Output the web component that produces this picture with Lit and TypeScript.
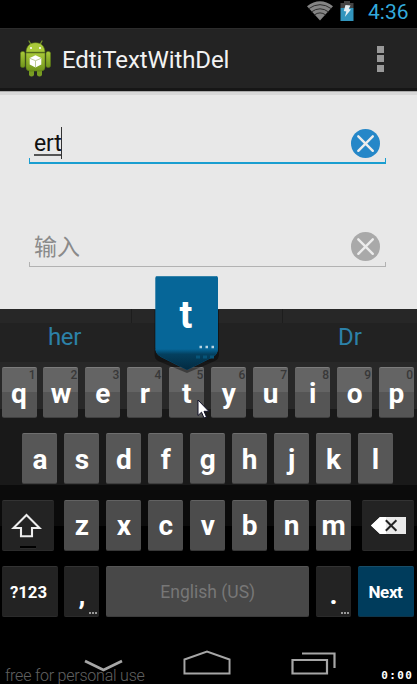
import { LitElement, html, css, svg, nothing } from "lit";
import { customElement, property } from "lit/decorators.js";
import { classMap } from "lit/directives/class-map.js";

@customElement("edit-field")
class EditField extends LitElement {
  @property() value = "";
  @property() hint = "";
  @property({ type: Boolean }) active = false;

  static styles = css`
    :host { display: block; }
    .field {
      position: relative; display: flex; align-items: center; justify-content: space-between;
      height: 46px; padding: 0 6px 0 5px; box-sizing: border-box;
    }
    .text { font-size: 23px; line-height: 46px; display: flex; align-items: center; color: #111; }
    .typed { line-height: 20px; height: 22px; border-bottom: 2px solid #555; box-sizing: border-box; position: relative; top: 4px; letter-spacing: -0.2px; }
    .hint { color: #8a8a8a; font-weight: 400; position: relative; top: 4px; }
    .caret { width: 1px; height: 32px; background: #333; position: relative; top: 2px; }
    .clear { width: 29px; height: 29px; display: block; position: relative; top: 2px; }
    .edge { position: absolute; left: 0; right: 0; bottom: 0; height: 4px; border: 1px solid #b2b2b2; border-top: 0; }
    .edge.on { border: 1px solid #1a9ed0; border-bottom-width: 2px; border-top: 0; height: 4px; }
  `;

  render() {
    return html`<div class="field">
      <div class="text">
        ${this.value
          ? html`<span class="typed">${this.value}</span><span class="caret"></span>`
          : html`<span class="hint">${this.hint}</span>`}
      </div>
      <svg class="clear" viewBox="0 0 29 29">
        <circle cx="14.5" cy="14.5" r="14.5" fill=${this.active ? "#2587c8" : "#a9a9a9"} />
        <path d="M7.3 7.3L21.8 21.8M21.8 7.3L7.3 21.8" stroke="#ececec" stroke-width="2.4" stroke-linecap="round" />
      </svg>
      <div class=${classMap({ edge: true, on: this.active })}></div>
    </div>`;
  }
}

@customElement("key-cap")
class KeyCap extends LitElement {
  @property() label = "";
  @property() alt = "";
  @property() kind = "letter";
  @property({ type: Boolean }) more = false;

  static styles = css`
    :host { display: block; min-width: 0; }
    .key {
      position: relative; height: 51px; border-radius: 2px; box-sizing: border-box;
      display: flex; align-items: center; justify-content: center;
      color: #fff; font-weight: 700; font-size: 28px; line-height: 32px;
      border-top: 1px solid #6e6e6e; border-bottom: 1px solid #404040;
      background: #575757;
    }
    .label { position: relative; top: 1px; white-space: nowrap; }
    .top { background: linear-gradient(#646464 0 50%, #555 50%); border-top-color: #7c7c7c; }
    .low { background: #4c4c4c; border-top-color: #626262; border-bottom-color: #373737; }
    .dark { background: #232323; border-color: #333 #333 #2b2b2b; }
    .small { font-size: 16.8px; }
    .small .label { top: 0; left: -1px; }
    .punct .label { top: 3px; left: 0; }
    .space { background: #484848; border-color: #555 #555 #3c3c3c; font-size: 17.5px; font-weight: 400; color: #777; }
    .space .label { top: 0; }
    .next { background: #003c5c; border-color: #174d68 #174d68 #0e354a; font-size: 17px; letter-spacing: -0.4px; }
    .next .label { top: 0; left: -0.5px; }
    .alt { position: absolute; right: 1px; top: 0; font-size: 12px; line-height: 14px; font-weight: 500; color: #383838; }
    .dots { position: absolute; right: 2px; bottom: 2px; display: flex; gap: 1px; }
    .dots i { width: 2px; height: 2px; background: #999; }
    .lock { position: absolute; left: 18px; bottom: 1px; width: 16px; height: 3px; background: #000; border-bottom: 1px solid #2c2c2c; box-sizing: border-box; }
    svg { display: block; }
    .shift { position: relative; left: -1px; }
  `;

  face() {
    if (this.label === "shift")
      return html`<svg class="shift" width="31" height="25" viewBox="0 0 31 25">
        <path d="M15.5 2L28.5 15H21V23.3H10V15H2.5Z" fill="none" stroke="#ededed" stroke-width="2.1" />
      </svg><i class="lock"></i>`;
    if (this.label === "delete")
      return html`<svg width="35" height="19" viewBox="0 0 35 19">
        <path d="M0 9.5L9 1H35V18H9Z" fill="#e9e9e9" />
        <path d="M0 9.5L9 1H15V18H9Z" fill="#fff" />
        <path d="M14.8 4.3L25.4 14.7M25.4 4.3L14.8 14.7" stroke="#222" stroke-width="2" />
      </svg>`;
    return html`<span class="label">${this.label}</span>`;
  }

  render() {
    return html`<div class="key ${this.kind}">
      ${this.face()}
      ${this.alt ? html`<span class="alt">${this.alt}</span>` : nothing}
      ${this.more ? html`<span class="dots"><i></i><i></i><i></i></span>` : nothing}
    </div>`;
  }
}

@customElement("app-root")
class AppRoot extends LitElement {
  static styles = css`
    :host {
      display: block; width: 417px; height: 684px; position: relative; overflow: hidden; background: #000;
      font-family: Roboto, "Noto Sans CJK SC", sans-serif;
    }
    svg { display: block; }
    .status { height: 28px; display: flex; align-items: flex-start; box-sizing: border-box; padding-right: 9px; justify-content: flex-end; }
    .wifi { margin: 1px 6px 0 0; }
    .battery { margin: 1px 14px 0 0; }
    .clock { font-size: 21px; line-height: 25px; color: #33aadb; width: 40px; white-space: nowrap; }
    .bar {
      height: 63px; box-sizing: border-box; background: #232323; border-top: 1px solid #2c2c2c; border-bottom: 3px solid #161616;
      display: flex; align-items: center; padding: 0 33px 0 20px;
    }
    .title { flex: 1; margin-left: 11px; font-size: 24px; line-height: 28px; color: #f2f2f2; position: relative; top: 1px; white-space: nowrap; letter-spacing: -0.1px; }
    .overflow { display: grid; gap: 2.5px; }
    .overflow i { width: 7px; height: 7px; background: #999; }
    .content { height: 218px; box-sizing: border-box; background: #e8e8e8; border-top: 1px solid #aaa; box-shadow: inset 0 3px 0 #d8d8d8; padding: 26px 31px 0 29px; }
    .content edit-field + edit-field { margin-top: 57px; }
    .keyboard {
      height: 327px; box-sizing: border-box; padding: 0 3px 0 1.5px;
      background: linear-gradient(#272727 0 14px, #222 14px 53px, #282828 53px 100px, #191919 100px 176px, #0b0b0b 176px 217px, #000 217px);
    }
    .suggest { height: 58px; display: grid; grid-template-columns: 129px 1fr 131px; color: #2c81a8; font-size: 24px; line-height: 56px; }
    .suggest span { text-align: center; }
    .suggest span:first-child { padding-right: 3px; letter-spacing: -0.3px; }
    .suggest span:last-child { padding-left: 3px; }
    .suggest .mid { border: solid #1d1d1d; border-width: 0 1px; height: 14px; }
    .row { display: grid; height: 51px; margin-bottom: 15.4px; column-gap: 6.95px; }
    .r1 { grid-template-columns: repeat(10, 1fr); }
    .r2 { grid-template-columns: repeat(9, 1fr); padding: 0 20.95px; }
    .r3 { display: flex; gap: 0; justify-content: space-between; }
    .r3 > key-cap { width: 52px; }
    .letters { display: grid; grid-template-columns: repeat(7, 35px); column-gap: 6.95px; }
    .r4 { grid-template-columns: 56px 35px 1fr 35px 56px; }
    .nav { height: 48px; position: relative; display: flex; padding: 14px 81px 0 84px; box-sizing: border-box; justify-content: space-between; }
    .mark { position: absolute; left: 5px; bottom: -2px; font-size: 16px; line-height: 20px; font-weight: 300; color: #606060; white-space: nowrap; letter-spacing: -.22px; }
    .timer { position: absolute; right: 5px; bottom: 2px; font: 700 11px/13px "DejaVu Sans Mono", monospace; color: #fff; letter-spacing: 1.4px; margin-right: -1.4px; }
    .popup { position: absolute; left: 153px; top: 274px; }
    .popletter { position: absolute; left: 155px; top: 289px; width: 62px; text-align: center; font-weight: 700; font-size: 38px; line-height: 52px; color: #fff; }
    .pointer { position: absolute; left: 197px; top: 399px; }
  `;

  bot() {
    return svg`
      <defs><linearGradient id="g" x1="0" x2="0" y1="0" y2="1">
        <stop offset="0" stop-color="#a9c93a"/><stop offset="1" stop-color="#70941b"/>
      </linearGradient></defs>
      <path d="M9 1L11.3 5M22 1L19.8 5" stroke="#78982c" stroke-width="1.2" stroke-linecap="round"/>
      <rect x="9" y="26" width="5" height="10.5" rx="2.3" fill="#789c22"/>
      <rect x="17" y="26" width="5" height="10.5" rx="2.3" fill="#789c22"/>
      <rect x="0.5" y="11.5" width="4.5" height="16" rx="1.8" fill="url(#g)" stroke="#5a7916" stroke-width=".6"/>
      <rect x="26" y="11.5" width="4.5" height="16" rx="1.8" fill="url(#g)" stroke="#5a7916" stroke-width=".6"/>
      <path d="M6 13H25V27Q25 31 21 31H10Q6 31 6 27Z" fill="url(#g)" stroke="#5a7916" stroke-width=".6"/>
      <path d="M6 12.2C6.3 6 10 2.7 15.5 2.7S24.7 6 25 12.2Z" fill="#a9c93a" stroke="#5a7916" stroke-width=".6"/>
      <circle cx="11" cy="8" r="1.1" fill="#fff"/><circle cx="20" cy="8" r="1.1" fill="#fff"/>
      <path d="M15.5 15.2L21.3 18V24.5L15.5 27.6L9.7 24.5V18Z" fill="#fff"/>
      <path d="M10 18.4L15.5 20.7L21 18.4M15.5 20.7V27" fill="none" stroke="#b5c48c" stroke-width=".9"/>`;
  }

  render() {
    const top = [..."qwertyuiop"];
    return html`
      <div class="status">
        <svg class="wifi" width="28" height="20" viewBox="0 0 28 20">
          <path d="M14 19.5L1 5.2Q14 -4.5 27 5.2Z" fill="#858585"/>
          <path d="M2.5 7.8Q14 -.5 25.5 7.8M5.3 11Q14 4.6 22.7 11M8.2 14Q14 9.8 19.8 14" fill="none" stroke="#222" stroke-width="0.9"/>
        </svg>
        <svg class="battery" width="14" height="20" viewBox="0 0 14 20">
          <path d="M4 0H10V2H13.5V7H.5V2H4Z" fill="#444"/>
          <rect x=".5" y="7" width="13" height="13" fill="#3295bd"/>
          <path d="M5.5 4L10.5 4.5L8.7 8L11 8.5L4.8 16L6.3 10.5L3.8 10Z" fill="#e4eef2"/>
        </svg>
        <div class="clock">4:36</div>
      </div>
      <div class="bar">
        <svg width="31" height="38" viewBox="0 0 31 38">${this.bot()}</svg>
        <div class="title">EdtiTextWithDel</div>
        <div class="overflow"><i></i><i></i><i></i></div>
      </div>
      <div class="content">
        <edit-field value="ert" active></edit-field>
        <edit-field hint="输入"></edit-field>
      </div>
      <div class="keyboard">
        <div class="suggest"><span>her</span><span class="mid"></span><span>Dr</span></div>
        <div class="row r1">${top.map((c, i) => html`<key-cap label=${c} alt=${String((i + 1) % 10)} kind="top"></key-cap>`)}</div>
        <div class="row r2">${[..."asdfghjkl"].map((c) => html`<key-cap label=${c}></key-cap>`)}</div>
        <div class="row r3">
          <key-cap label="shift" kind="dark"></key-cap>
          <div class="letters">${[..."zxcvbnm"].map((c) => html`<key-cap label=${c} kind="low"></key-cap>`)}</div>
          <key-cap label="delete" kind="dark"></key-cap>
        </div>
        <div class="row r4">
          <key-cap label="?123" kind="dark small"></key-cap>
          <key-cap label="," kind="dark punct" more></key-cap>
          <key-cap label="English (US)" kind="space"></key-cap>
          <key-cap label="." kind="dark punct" more></key-cap>
          <key-cap label="Next" kind="next"></key-cap>
        </div>
      </div>
      <div class="nav">
        <div class="mark">free for personal use</div>
        <svg width="40" height="28" viewBox="0 0 40 28"><path d="M1 11L19.5 20L38 11" fill="none" stroke="#a6a6a6" stroke-width="2.7"/></svg>
        <svg width="48" height="26" viewBox="0 0 48 26"><path d="M2 23.5V9.5L25 1.5L48 9.5V23.5Z" transform="translate(-.5 0) scale(.98 1)" fill="none" stroke="#a6a6a6" stroke-width="2"/></svg>
        <svg width="46" height="26" viewBox="0 0 46 26"><path d="M2.5 10H37V23.5H2.5ZM12 3.5H44.5V18" fill="none" stroke="#a6a6a6" stroke-width="2.2"/></svg>
        <div class="timer">0:00</div>
      </div>
      <svg class="popup" width="68" height="100" viewBox="0 0 68 100">
        <defs><linearGradient id="tip" x1="0" x2="0" y1="0" y2="1">
          <stop offset="0" stop-color="#066698"/><stop offset=".25" stop-color="#04405f"/><stop offset="1" stop-color="#032a40"/>
        </linearGradient></defs>
        <path d="M1.5 36H66V80Q66 85 62 87L34 99L5 87Q1.5 85 1.5 80Z" fill="#000" opacity=".4"/>
        <path d="M2.3 4Q2.3 2 4.3 2H63Q65 2 65 4V74Q65 80 60 83L34 96L8 83Q2.3 80 2.3 74Z" fill="#066698"/>
        <path d="M2.5 75H64.8Q64.5 80.5 60 83L34 96L8 83Q3 80.5 2.5 75Z" fill="url(#tip)"/>
        <path d="M4 2.5H63" stroke="#3483a9"/>
        <path d="M46.5 73h2.5M52.5 73h2.5M58.5 73h2.5" stroke="#b8d4e2" stroke-width="2.5"/>
        <path d="M43 83h4M50 83h4M57 83h4" stroke="#075479" stroke-width="3"/>
      </svg>
      <div class="popletter">t</div>
      <svg class="pointer" width="13" height="21" viewBox="0 0 13 21">
        <path d="M1 1V16.5L4.5 13.2L7 19L9.5 18L7 12.3H11.8Z" fill="#fff" stroke="#111127" stroke-width="1"/>
      </svg>
    `;
  }
}
